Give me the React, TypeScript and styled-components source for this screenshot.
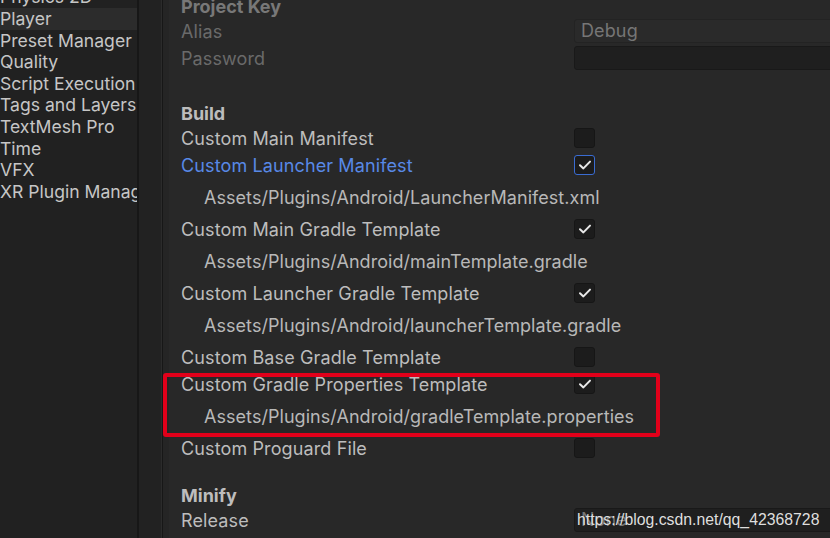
import React from 'react';
import styled, { createGlobalStyle } from 'styled-components';

const GlobalStyle = createGlobalStyle`
  html, body {
    margin: 0;
    padding: 0;
    background: #282828;
    overflow: hidden;
  }
  body {
    font-family: Inter, 'Noto Sans', sans-serif;
  }
`;

const Window = styled.div`
  position: relative;
  display: flex;
  width: 830px;
  height: 538px;
  overflow: hidden;
  background: #282828;
`;

const Sidebar = styled.nav`
  width: 137px;
  flex: none;
  background: #212121;
  overflow: hidden;
`;

const SideList = styled.ul`
  list-style: none;
  margin: -13.6px 0 0;
  padding: 0;
`;

const SideItem = styled.li<{ $selected?: boolean }>`
  height: 21.6px;
  line-height: 21.6px;
  padding-left: 0;
  white-space: nowrap;
  font-size: 17.6px;
  color: #c6c6c6;
  background: ${(p) => (p.$selected ? '#2c2c2c' : 'transparent')};
`;

const Splitter = styled.div<{ $w: number; $c: string }>`
  width: ${(p) => p.$w}px;
  flex: none;
  background: ${(p) => p.$c};
`;

const Main = styled.main`
  flex: 1;
  min-width: 0;
  padding-left: 18px;
  overflow: hidden;
  box-shadow: inset 6px 0 0 #252525;
`;

const Inspector = styled.div`
  margin-top: -5.5px;
  display: flex;
  flex-direction: column;
  font-size: 18px;
  letter-spacing: 0.12px;
`;

const Heading = styled.div<{ $dim?: boolean }>`
  height: 23px;
  line-height: 23px;
  font-weight: 700;
  letter-spacing: 0;
  color: ${(p) => (p.$dim ? '#787878' : '#bdbdbd')};
`;

const Row = styled.div`
  display: grid;
  grid-template-columns: 393px 320px;
  align-items: center;
  height: 27px;
`;

const Label = styled.span<{ $tone?: 'normal' | 'dim' | 'active' }>`
  white-space: nowrap;
  color: ${(p) =>
    p.$tone === 'dim' ? '#6a6a6a' : p.$tone === 'active' ? '#5889e6' : '#bdbdbd'};
`;

const PathRow = styled.div`
  height: 37px;
  line-height: 37px;
  padding-left: 23px;
  letter-spacing: 0.05px;
  color: #b8b8b8;
  white-space: nowrap;
`;

const Spacer = styled.div<{ $h: number }>`
  height: ${(p) => p.$h}px;
`;

const Field = styled.div<{ $dark?: boolean }>`
  box-sizing: border-box;
  height: 24px;
  border-radius: 3px;
  padding-left: 6px;
  line-height: 22px;
  color: #767676;
  background: ${(p) => (p.$dark ? '#1f1f1f' : '#2a2a2a')};
  border: 1px solid ${(p) => (p.$dark ? '#191919' : '#232323')};
`;

const Box = styled.div<{ $focus?: boolean }>`
  box-sizing: border-box;
  width: 21px;
  height: 20px;
  border-radius: 3px;
  background: #1c1c1c;
  border: 1px solid ${(p) => (p.$focus ? '#3a6cd2' : '#161616')};
  display: flex;
  align-items: center;
  justify-content: center;
`;

const Highlight = styled.div`
  position: absolute;
  left: 163px;
  top: 373px;
  width: 497px;
  height: 64px;
  box-sizing: border-box;
  border: 4px solid #e2001a;
  border-radius: 3px;
  pointer-events: none;
`;

const Watermark = styled.span`
  position: absolute;
  left: 577px;
  top: 508px;
  line-height: 23px;
  font-family: 'Liberation Sans', Arial, sans-serif;
  font-size: 15.8px;
  color: #dedede;
  white-space: nowrap;
`;

const Check = () => (
  <svg width="14" height="12" viewBox="0 0 14 12">
    <path d="M2 6.2 L5.4 9.4 L12 2.6" fill="none" stroke="#e8e8e8" strokeWidth="2" strokeLinecap="round" strokeLinejoin="round" />
  </svg>
);

const CheckBox = ({ checked, focus }: { checked?: boolean; focus?: boolean }) => (
  <Box $focus={focus}>{checked && <Check />}</Box>
);

const sideItems = [
  'Physics 2D',
  'Player',
  'Preset Manager',
  'Quality',
  'Script Execution Order',
  'Tags and Layers',
  'TextMesh Pro',
  'Time',
  'VFX',
  'XR Plugin Management',
];

type BuildItem = { label: string; checked: boolean; focus?: boolean; path?: string };

const buildItems: BuildItem[] = [
  { label: 'Custom Main Manifest', checked: false },
  { label: 'Custom Launcher Manifest', checked: true, focus: true, path: 'Assets/Plugins/Android/LauncherManifest.xml' },
  { label: 'Custom Main Gradle Template', checked: true, path: 'Assets/Plugins/Android/mainTemplate.gradle' },
  { label: 'Custom Launcher Gradle Template', checked: true, path: 'Assets/Plugins/Android/launcherTemplate.gradle' },
  { label: 'Custom Base Gradle Template', checked: false },
  { label: 'Custom Gradle Properties Template', checked: true, path: 'Assets/Plugins/Android/gradleTemplate.properties' },
  { label: 'Custom Proguard File', checked: false },
];

export default function App() {
  return (
    <>
      <GlobalStyle />
      <Window>
        <Sidebar>
          <SideList>
            {sideItems.map((item) => (
              <SideItem key={item} $selected={item === 'Player'}>
                {item}
              </SideItem>
            ))}
          </SideList>
        </Sidebar>
        <Splitter $w={2} $c="#171717" />
        <Splitter $w={22} $c="#222222" />
        <Splitter $w={1} $c="#2b2b2b" />
        <Splitter $w={1} $c="#171717" />
        <Main>
          <Inspector>
            <Heading $dim>Project Key</Heading>
            <Row>
              <Label $tone="dim">Alias</Label>
              <Field>Debug</Field>
            </Row>
            <Row>
              <Label $tone="dim">Password</Label>
              <Field $dark />
            </Row>
            <Spacer $h={30} />
            <Heading>Build</Heading>
            {buildItems.map((item) => (
              <React.Fragment key={item.label}>
                <Row>
                  <Label $tone={item.focus ? 'active' : 'normal'}>{item.label}</Label>
                  <CheckBox checked={item.checked} focus={item.focus} />
                </Row>
                {item.path && <PathRow>{item.path}</PathRow>}
              </React.Fragment>
            ))}
            <Spacer $h={22} />
            <Heading>Minify</Heading>
            <Row>
              <Label>Release</Label>
              <Field $dark>None</Field>
            </Row>
          </Inspector>
        </Main>
        <Highlight />
        <Watermark>https://blog.csdn.net/qq_42368728</Watermark>
      </Window>
    </>
  );
}
